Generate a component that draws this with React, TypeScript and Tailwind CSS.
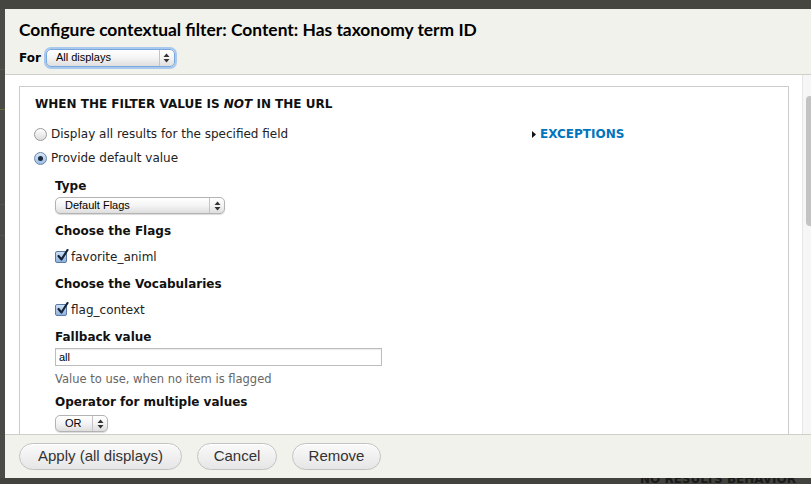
import type { ReactNode } from "react";

const UI = { fontFamily: '"DejaVu Sans", "Liberation Sans", sans-serif' };
const SMALL = { fontFamily: '"Liberation Sans", Arial, sans-serif' };
const TITLE = { fontFamily: 'Lato, "DejaVu Sans", sans-serif' };

function Arrows() {
  return (
    <svg width="7" height="10" viewBox="0 0 7 10">
      <path d="M3.5 0.5 L6.5 4 L0.5 4 Z" fill="#333" />
      <path d="M3.5 9.5 L6.5 6 L0.5 6 Z" fill="#333" />
    </svg>
  );
}

function MacSelect({ label, width, focused }: { label: string; width: string; focused?: boolean }) {
  return (
    <div
      className={`flex items-stretch rounded-[5px] border bg-gradient-to-b from-white via-[#f4f4f4] to-[#dedede] ${width} ${
        focused
          ? "h-[18px] border-[#7aa7dc] shadow-[0_0_0_2px_#a9c8ee]"
          : "h-[17px] border-[#b3b3b3] shadow-[0_1px_1px_rgba(0,0,0,0.15)]"
      }`}
    >
      <span className="flex-1 pl-[9px] text-[11px] leading-[15px] text-black" style={SMALL}>
        {label}
      </span>
      <span className="flex w-[15px] items-center justify-center border-l border-[#c4c4c4]">
        <Arrows />
      </span>
    </div>
  );
}

function Radio({ checked }: { checked?: boolean }) {
  return (
    <span
      className={`flex h-[13px] w-[13px] shrink-0 items-center justify-center rounded-full border ${
        checked
          ? "border-[#6b86a8] bg-gradient-to-b from-[#d7e6f7] to-[#9dbde4]"
          : "border-[#9a9a9a] bg-gradient-to-b from-white to-[#dcdcdc]"
      }`}
    >
      {checked && <span className="h-[5px] w-[5px] rounded-full bg-[#1b2a3d]" />}
    </span>
  );
}

function Checkbox() {
  return (
    <span className="relative flex h-[12px] w-[12px] shrink-0 items-center justify-center rounded-[2px] border border-[#5b7aa3] bg-gradient-to-b from-[#cfe0f5] to-[#8fb2de]">
      <svg className="absolute -top-[3px] left-[1px]" width="12" height="13" viewBox="0 0 12 13">
        <path d="M1.5 7 L4.5 10.5 L10.5 1" fill="none" stroke="#16263a" strokeWidth="2.2" strokeLinecap="round" strokeLinejoin="round" />
      </svg>
    </span>
  );
}

function Label({ children }: { children: ReactNode }) {
  return <div className="text-[12px] font-bold leading-[16px] text-[#111]">{children}</div>;
}

function Button({ children, width }: { children: ReactNode; width: string }) {
  return (
    <button
      className={`h-[27px] ${width} rounded-full border border-[#c2c2c2] bg-gradient-to-b from-[#fafafa] to-[#e6e6e6] text-[15px] text-[#333] shadow-[inset_0_1px_0_#fff]`}
      style={SMALL}
    >
      {children}
    </button>
  );
}

export default function App() {
  return (
    <div className="flex h-[484px] w-[811px] flex-col overflow-hidden bg-[#42423e]" style={UI}>
      <div className="h-[9px] shrink-0 bg-[#464640]" />
      <div className="flex min-h-0 flex-1">
        {/* darkened page behind the dialog */}
        <div className="flex w-[5px] shrink-0 flex-col bg-[#4a4a46]">
          <div className="h-[61px] border-b border-[#55554a]" />
          <div className="h-[40px] border-b border-[#6a6a3a]" />
          <div className="h-[95px] border-b border-[#55554f]" />
          <div className="h-[31px] border-b border-[#55554f]" />
        </div>

        {/* dialog */}
        <div className="flex min-w-0 flex-1 flex-col bg-[#f2f2ed]">
          <div className="shrink-0 border-b border-[#cfcfca] px-[14px] pt-[10px] pb-[7px]">
            <h1 className="text-[17.4px] font-bold leading-[22px] text-black" style={TITLE}>
              Configure contextual filter: Content: Has taxonomy term ID
            </h1>
            <div className="mt-[8px] flex items-center gap-[5px]">
              <span className="text-[12px] font-bold text-black">For</span>
              <MacSelect label="All displays" width="w-[129px]" focused />
            </div>
          </div>

          <div className="flex min-h-0 flex-1 bg-white">
            <div className="min-w-0 flex-1 overflow-hidden pt-[11px] pl-[14px] pr-[13px]">
              <div className="h-[400px] border border-[#cccccc] pl-[15px] pt-[9px]">
                <div className="text-[12px] font-bold uppercase leading-[16px] text-[#111]">
                  When the filter value is <em>not</em> in the URL
                </div>

                <div className="mt-[14px] flex">
                  <div className="w-[497px] shrink-0">
                    <label className="-ml-[1px] flex items-center gap-[4px] text-[12px] leading-[16px] text-[#222]">
                      <Radio />
                      Display all results for the specified field
                    </label>
                    <label className="-ml-[1px] mt-[8px] flex items-center gap-[4px] text-[12px] leading-[16px] text-[#222]">
                      <Radio checked />
                      Provide default value
                    </label>

                    <div className="ml-[20px] mt-[12px]">
                      <Label>Type</Label>
                      <div className="mt-[3px]">
                        <MacSelect label="Default Flags" width="w-[170px]" />
                      </div>

                      <div className="mt-[9px]">
                        <Label>Choose the Flags</Label>
                      </div>
                      <label className="mt-[10px] flex items-center gap-[4px] text-[12px] leading-[16px] text-[#222]">
                        <Checkbox />
                        favorite_animl
                      </label>

                      <div className="mt-[11px]">
                        <Label>Choose the Vocabularies</Label>
                      </div>
                      <label className="mt-[10px] flex items-center gap-[4px] text-[12px] leading-[16px] text-[#222]">
                        <Checkbox />
                        flag_context
                      </label>

                      <div className="mt-[11px]">
                        <Label>Fallback value</Label>
                      </div>
                      <div
                        className="mt-[3px] h-[18px] w-[327px] border border-[#bdbdbd] pl-[3px] text-[11px] leading-[16px] text-black shadow-[inset_0_1px_1px_rgba(0,0,0,0.08)]"
                        style={SMALL}
                      >
                        all
                      </div>
                      <div className="mt-[5px] text-[11.5px] leading-[16px] text-[#666]">
                        Value to use, when no item is flagged
                      </div>

                      <div className="mt-[7px]">
                        <Label>Operator for multiple values</Label>
                      </div>
                      <div className="mt-[5px]">
                        <MacSelect label="OR" width="w-[53px]" />
                      </div>
                    </div>
                  </div>

                  <div className="flex items-center gap-[4px] self-start">
                    <svg width="4" height="7" viewBox="0 0 4 7">
                      <path d="M0 0 L4 3.5 L0 7 Z" fill="#111" />
                    </svg>
                    <span className="text-[12px] font-bold leading-[16px] text-[#0074bd]">EXCEPTIONS</span>
                  </div>
                </div>
              </div>
            </div>

            {/* scrollbar */}
            <div className="w-[9px] shrink-0 border-l border-[#e6e6e6] bg-[#f6f6f6] pl-[3px] pt-[21px]">
              <div className="h-[130px] w-full rounded-l-[4px] bg-[#c3c3c3]" />
            </div>
          </div>

          <div className="flex h-[44px] shrink-0 items-center gap-[15px] border-t border-[#cfcfca] pl-[14px]">
            <Button width="w-[163px]">Apply (all displays)</Button>
            <Button width="w-[80px]">Cancel</Button>
            <Button width="w-[89px]">Remove</Button>
          </div>
        </div>
      </div>

      {/* page behind, visible below the dialog */}
      <div className="flex h-[6px] shrink-0 overflow-hidden">
        <div className="w-[640px] shrink-0" />
        <div className="-mt-[7px] whitespace-nowrap text-[12px] font-bold leading-[16px] text-[#1a1a1a]">
          NO RESULTS BEHAVIOR
        </div>
      </div>
    </div>
  );
}
